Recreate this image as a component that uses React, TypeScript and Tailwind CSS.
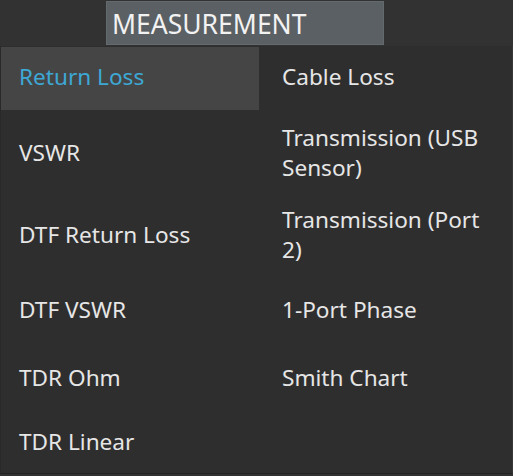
import React from "react";

type Item = { label: string; selected?: boolean };

const rows: [Item, Item | null][] = [
  [{ label: "Return Loss", selected: true }, { label: "Cable Loss" }],
  [{ label: "VSWR" }, { label: "Transmission (USB Sensor)" }],
  [{ label: "DTF Return Loss" }, { label: "Transmission (Port 2)" }],
  [{ label: "DTF VSWR" }, { label: "1-Port Phase" }],
  [{ label: "TDR Ohm" }, { label: "Smith Chart" }],
  [{ label: "TDR Linear" }, null],
];

function Cell({ item, right, first }: { item: Item | null; right?: boolean; first?: boolean }) {
  if (!item) return <div />;
  return (
    <div
      className={`flex items-center ${right ? "pl-[23px] pr-[14px]" : "pl-[18px] pr-3"} ${
        first ? "pb-[3px]" : ""
      } ${item.selected ? "bg-[#454545] text-[#3ea8d5]" : "text-[#e6e6e6]"}`}
    >
      <span className="text-[22.6px] leading-[30px]">{item.label}</span>
    </div>
  );
}

export default function App() {
  return (
    <div
      className="w-[513px] h-[476px] bg-[#323232] flex flex-col"
      style={{ fontFamily: '"Noto Sans", "Open Sans", sans-serif' }}
    >
      <div className="h-[46px] pt-[1px] pl-[106px]">
        <div className="w-[278px] h-[44px] bg-[#5a6064] border border-[#636a6e] pl-[5px] flex items-center">
          <span className="text-[26.5px] leading-none text-[#f2f2f2] pt-[2px]">MEASUREMENT</span>
        </div>
      </div>
      <div className="h-[428px] bg-[#2e2e2e] border-l border-[#292929] border-b border-b-[#232323] border-r border-r-[#383838] pt-[1px]">
        <div className="grid grid-cols-[258px_1fr] grid-rows-[63px_86px_77px_73px_63px_66px]">
          {rows.map(([l, r], i) => (
            <React.Fragment key={i}>
              <Cell item={l} first={i === 0} />
              <Cell item={r} right first={i === 0} />
            </React.Fragment>
          ))}
        </div>
      </div>
    </div>
  );
}
